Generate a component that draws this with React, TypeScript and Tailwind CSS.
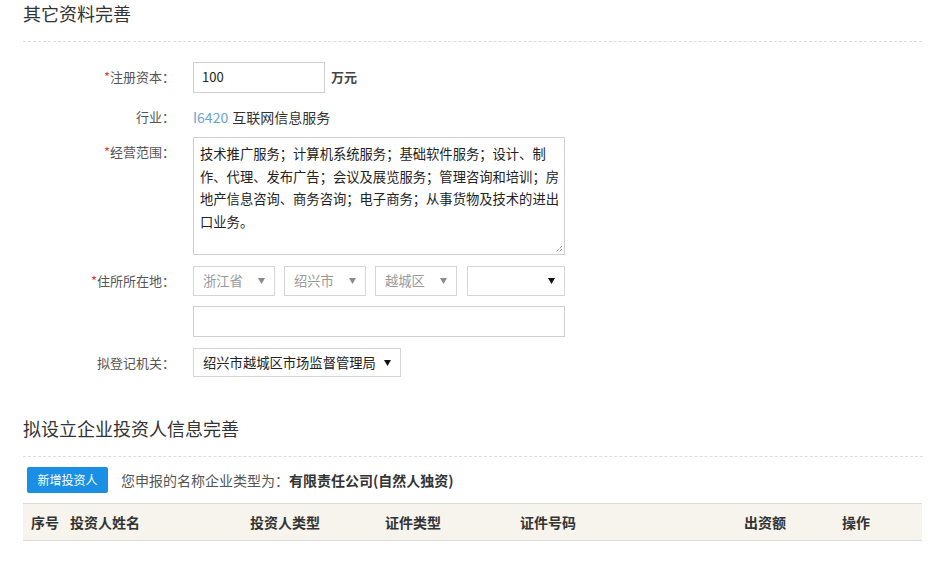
import React from "react";

const font = { fontFamily: '"Microsoft YaHei", "Noto Sans CJK SC", "Noto Sans", sans-serif' };

function Label({ text, required }: { text: string; required?: boolean }) {
  return (
    <div className="w-[155px] shrink-0 text-right pr-[3px] text-[13px] text-[#555] leading-[20px]">
      {required && <span className="text-[#e4393c]">*</span>}
      {text}：
    </div>
  );
}

function Arrow({ dark }: { dark?: boolean }) {
  return (
    <svg width="7" height="6" viewBox="0 0 7 6" className="shrink-0">
      <path d="M0 0 L7 0 L3.5 6 Z" fill={dark ? "#111" : "#8a8a8a"} />
    </svg>
  );
}

function Sel({ text, w, dim, dark }: { text: string; w: string; dim?: boolean; dark?: boolean }) {
  return (
    <div
      className={`${w} h-[30px] border border-[#d5d5d5] bg-white flex items-center justify-between pl-[9px] pr-[9px] text-[13.3px] ${
        dim ? "text-[#999]" : "text-[#333]"
      }`}
    >
      <span>{text}</span>
      <Arrow dark={dark} />
    </div>
  );
}

export default function App() {
  return (
    <div style={font} className="w-[928px] h-[577px] bg-white text-[#333] overflow-hidden">
      <div className="pl-[23px] pr-[6px]">
        <div className="pt-[2px] h-[41px] text-[18px] leading-[22px]">其它资料完善</div>
        <div className="border-t border-dashed border-[#ddd]" />

        <div className="mt-[20px] flex items-center h-[30px]">
          <Label text="注册资本" required />
          <div className="ml-[15px] w-[132px] h-[31px] border border-[#d0d0d0] flex items-center pl-[8px] text-[13px] text-[#222]">
            100
          </div>
          <div className="ml-[6px] text-[13px] font-bold text-[#444]">万元</div>
        </div>

        <div className="mt-[15px] flex items-center h-[20px]">
          <Label text="行业" />
          <div className="ml-[15px] text-[14px]">
            <span className="text-[#6aa4cf]">I6420</span>
            <span className="ml-[4px] text-[#333]">互联网信息服务</span>
          </div>
        </div>

        <div className="mt-[10px] flex">
          <div className="pt-[5px]">
            <Label text="经营范围" required />
          </div>
          <div className="ml-[15px] relative w-[372px] h-[118px] border border-[#d0d0d0] pl-[6px] pr-[3px] pt-[5px] text-[13.3px] leading-[22.5px] text-[#222]">
            技术推广服务；计算机系统服务；基础软件服务；设计、制作、代理、发布广告；会议及展览服务；管理咨询和培训；房地产信息咨询、商务咨询；电子商务；从事货物及技术的进出口业务。
            <svg className="absolute right-[1px] bottom-[1px]" width="9" height="9" viewBox="0 0 9 9">
              <path d="M8 2 L2 8 M8 5 L5 8" stroke="#777" strokeWidth="1" strokeDasharray="1 1" />
            </svg>
          </div>
        </div>

        <div className="mt-[10px] flex items-center h-[31px]">
          <Label text="住所所在地" required />
          <div className="ml-[15px] flex gap-[9px]">
            <Sel text="浙江省" w="w-[82px]" dim />
            <Sel text="绍兴市" w="w-[82px]" dim />
            <Sel text="越城区" w="w-[82px]" dim />
            <div className="ml-[1px]">
              <Sel text="" w="w-[98px]" dark />
            </div>
          </div>
        </div>

        <div className="mt-[10px] flex">
          <div className="w-[155px] shrink-0" />
          <div className="ml-[15px] w-[372px] h-[31px] border border-[#d0d0d0]" />
        </div>

        <div className="mt-[11px] flex items-center h-[29px]">
          <Label text="拟登记机关" />
          <div className="ml-[15px] w-[208px] h-[29px] border border-[#d5d5d5] flex items-center justify-between pl-[9px] pr-[9px] text-[13.3px] text-[#222]">
            <span>绍兴市越城区市场监督管理局</span>
            <Arrow dark />
          </div>
        </div>

        <div className="mt-[40px] h-[39px] text-[18px] leading-[22px]">拟设立企业投资人信息完善</div>
        <div className="border-t border-dashed border-[#ddd] w-[900px]" />

        <div className="mt-[10px] flex items-center h-[26px]">
          <div className="ml-[4px] w-[81px] h-[26px] rounded-[2px] bg-[#1a8fe3] text-white text-[12px] flex items-center justify-center">
            新增投资人
          </div>
          <div className="ml-[13px] text-[14px] text-[#555]">
            您申报的名称企业类型为：<span className="font-bold text-[#333]">有限责任公司(自然人独资)</span>
          </div>
        </div>

        <div className="mt-[10px] w-[899px] h-[38px] bg-[#f6f4ec] border-t border-b border-[#dcdcdc] flex items-center pl-[8px] text-[14px] font-bold text-[#333]">
          <div className="w-[39px]">序号</div>
          <div className="w-[180px]">投资人姓名</div>
          <div className="w-[135px]">投资人类型</div>
          <div className="w-[135px]">证件类型</div>
          <div className="w-[224px]">证件号码</div>
          <div className="w-[98px]">出资额</div>
          <div>操作</div>
        </div>
      </div>
    </div>
  );
}
